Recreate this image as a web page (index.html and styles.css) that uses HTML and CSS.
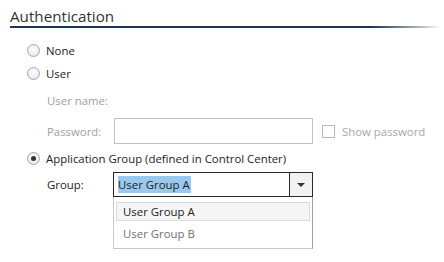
FILE: index.html
```html
<!DOCTYPE html>
<html lang="en">
<head>
    <meta charset="UTF-8">
    <title>Authentication</title>
    <link rel="stylesheet" href="styles.css">
</head>
<body>
<div class="panel">
    <h2 class="title">Authentication</h2>

    <div class="options">
        <label class="radio-row"><span class="radio"></span>None</label>
        <label class="radio-row"><span class="radio"></span>User</label>

        <div class="field disabled user-name">
            <span class="field-label">User name:</span>
        </div>
        <div class="field disabled password">
            <span class="field-label">Password:</span>
            <span class="textbox"></span>
            <span class="check"></span>
            <span class="check-label">Show password</span>
        </div>

        <label class="radio-row"><span class="radio checked"></span>Application Group (defined in Control Center)</label>

        <div class="field group">
            <span class="field-label">Group:</span>
            <div class="combo-wrap">
                <div class="combo">
                    <span class="combo-text"><span class="selection">User Group A</span></span>
                    <span class="combo-button"><span class="arrow"></span></span>
                </div>
                <ul class="dropdown">
                    <li class="item hover">User Group A</li>
                    <li class="item">User Group B</li>
                </ul>
            </div>
        </div>
    </div>
</div>
</body>
</html>
```

FILE: styles.css
```css
body {
    margin: 0;
    background: #fff;
    font-family: 'Open Sans', 'Noto Sans', sans-serif;
    font-size: 11.4px;
    color: #222;
}
.panel {
    padding: 6px 4px 0 10px;
}
.title {
    margin: 0;
    font-size: 15.2px;
    font-weight: normal;
    color: #333;
    line-height: 20px;
    padding-bottom: 1px;
}
.title::after {
    content: "";
    display: block;
    height: 2px;
    background: linear-gradient(to right, #1b355a 0%, #1b355a 84%, #b8bec6 96%, #ffffff 100%);
}
.options {
    padding: 10px 0 0 17px;
}
.radio-row {
    display: flex;
    align-items: center;
    height: 23px;
    gap: 6px;
}
.radio {
    width: 11px;
    height: 11px;
    border: 1px solid #a8a8a8;
    border-radius: 50%;
    background: radial-gradient(circle at 50% 40%, #ffffff 0%, #eeeeee 60%, #d8d8d8 100%);
    position: relative;
    flex: none;
}
.radio.checked::after {
    content: "";
    position: absolute;
    left: 3px;
    top: 3px;
    width: 5px;
    height: 5px;
    border-radius: 50%;
    background: #333;
}
.field {
    display: flex;
    align-items: center;
    padding-left: 20px;
}
.field-label {
    width: 66px;
    flex: none;
}
.disabled {
    color: #a0a0a0;
}
.user-name {
    height: 24px;
    margin-top: 3px;
}
.password {
    height: 26px;
    margin-top: 6px;
    margin-bottom: 3px;
}
.textbox {
    width: 197px;
    height: 24px;
    border: 1px solid #c3c3c3;
    margin-left: 1px;
    flex: none;
}
.check {
    width: 11px;
    height: 11px;
    border: 1px solid #b8b8b8;
    margin-left: 9px;
    flex: none;
}
.check-label {
    margin-left: 7px;
    color: #a8a8a8;
}
.group {
    align-items: flex-start;
    margin-top: 2px;
}
.group .field-label {
    line-height: 25px;
}
.combo-wrap {
    width: 200px;
}
.combo {
    display: flex;
    height: 23px;
    border: 1px solid #2a2a2a;
    background: #fff;
}
.combo-text {
    flex: 1;
    padding-left: 4px;
    display: flex;
    align-items: center;
}
.selection {
    background: #99c9ef;
    line-height: 17px;
    padding-right: 1px;
}
.combo-button {
    width: 22px;
    border-left: 1px solid #2a2a2a;
    background: #f2f2f2;
    display: flex;
    align-items: center;
    justify-content: center;
}
.arrow {
    width: 0;
    height: 0;
    border-left: 4px solid transparent;
    border-right: 4px solid transparent;
    border-top: 4px solid #333;
}
.dropdown {
    list-style: none;
    margin: 0;
    padding: 5px 2px 3px 2px;
    border: 1px solid #a0a0a0;
    border-top: none;
    border-left-color: #c8c8c8;
    border-bottom-color: #c8c8c8;
}
.item {
    height: 22px;
    line-height: 24px;
    padding-left: 6px;
    color: #707070;
    border: 1px solid transparent;
}
.item.hover {
    background: #f5f5f5;
    border-color: #dadada;
    color: #222;
    height: 17px;
    line-height: 17px;
}
```
